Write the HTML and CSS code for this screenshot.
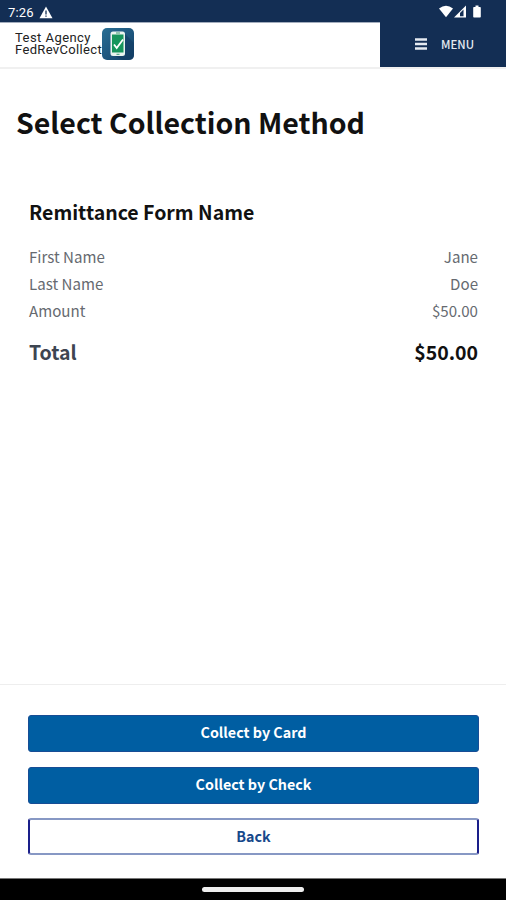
FILE: index.html
```html
<!DOCTYPE html>
<html lang="en">
<head>
<meta charset="utf-8">
<title>Select Collection Method</title>
<link rel="stylesheet" href="styles.css">
</head>
<body>
<div class="screen">
  <div class="status">
    <span class="time">7:26</span>
    <svg class="warning" width="14" height="13" viewBox="0 0 14 13"><path d="M7 .5 13.500 12.200H.5z" fill="#fff"/><path d="M7 4.500v4M7 9.500v1.300" stroke="#132e54" stroke-width="1.300"/></svg>
    <svg class="signals" width="43" height="14" viewBox="0 0 43 14"><path d="M0 3.500Q7-2 14 3.500L7 12.300z" fill="#fff"/><path d="M15 12.500 27 .5v12z" fill="#fff"/><path d="M21 11.300V8l3.500-3.500v6.800z" fill="#132e54"/><path d="M35 2h1.500V.5h3V2H41q.8 0 .8.8v8.900q0 .8-.8.8h-6q-.8 0-.8-.8V2.800q0-.8.8-.8z" fill="#fff"/></svg>
  </div>
  <header class="header">
    <div class="brand">
      <div class="brand-name"><span class="agency">Test Agency</span><span class="product">FedRevCollect</span></div>
      <svg class="logo" width="32" height="32" viewBox="0 0 32 32"><defs><linearGradient id="tile" x2="1" y2="1"><stop stop-color="#286e94"/><stop offset=".55" stop-color="#1d557d"/><stop offset="1" stop-color="#123c62"/></linearGradient></defs><rect width="32" height="32" rx="5" fill="url(#tile)"/><path d="m22 5 10 10v12q0 5-5 5h-6l-10-5z" fill="#123e66" opacity=".65"/><rect x="8.500" y="3.500" width="14.500" height="24.500" rx="2.500" fill="#e9f4ef"/><rect x="10" y="6.500" width="11.500" height="18" fill="#16955c"/><path d="m12 16.500 2.700 3.500 6.300-8.500" fill="none" stroke="#fff" stroke-width="1.800"/><path d="M14 5h4M14.500 26.300h3" stroke="#3c9a73"/></svg>
    </div>
    <div class="menu">
      <svg width="12" height="12" viewBox="0 0 12 12"><path d="M0 1.500h12M0 6h12M0 10.500h12" stroke="#e5eaf1" stroke-width="2.400"/></svg>
      <span>MENU</span>
    </div>
  </header>
  <main class="main">
    <h1><span>Select Collection Method</span></h1>
    <section class="summary">
      <h2><span>Remittance Form Name</span></h2>
      <div class="row"><span>First Name</span><span>Jane</span></div>
      <div class="row"><span>Last Name</span><span>Doe</span></div>
      <div class="row"><span>Amount</span><span>$50.00</span></div>
      <div class="total"><span class="total-label">Total</span><span>$50.00</span></div>
    </section>
  </main>
  <footer class="actions">
    <button class="button"><span>Collect by Card</span></button>
    <button class="button"><span>Collect by Check</span></button>
    <button class="button outline"><span>Back</span></button>
  </footer>
  <div class="navbar"><div class="handle"></div></div>
</div>
</body>
</html>
```

FILE: styles.css
```css
* { box-sizing: border-box; }
body { margin: 0; background: #fff; }
.screen {
  width: 506px;
  height: 900px;
  display: flex;
  flex-direction: column;
  font-family: "Noto Sans CJK SC", "Noto Sans", sans-serif;
  color: #111;
}
.status {
  height: 22px;
  flex: none;
  display: flex;
  align-items: center;
  padding: 2px 24px 0 8px;
  background: #132e54;
  color: #fff;
}
.time { padding-top: 1px; font: 13px/18px Roboto, sans-serif; letter-spacing: .2px; }
.warning { margin-left: 5px; }
.signals { margin-left: auto; }
.header { height: 47px; flex: none; display: flex; border-bottom: 2px solid #f0f0f0; }
.brand { width: 380px; display: flex; align-items: flex-start; padding: 5px 0 0 15px; border-top: 1px solid #a3adbd; }
.brand-name { width: 87px; padding-top: 4px; font: 13px/12px Roboto, sans-serif; color: #222; white-space: nowrap; }
.brand-name span { display: block; }
.agency { letter-spacing: .45px; }
.product { letter-spacing: .35px; }
.menu {
  flex: 1;
  display: flex;
  align-items: center;
  padding: 0 0 1px 35px;
  gap: 14px;
  background: #132e54;
  color: #e5eaf1;
  font-size: 11.4px;
  line-height: 18px;
  font-weight: 500;
}
.main { flex: 1; padding: 33px 28px 0 29px; }
h1 { margin: 0 0 0 -13px; font-size: 28.5px; line-height: 40px; font-weight: 700; white-space: nowrap; }
.summary { padding-top: 55px; }
h2 { margin: 0 0 16px; font-size: 19.5px; line-height: 30px; font-weight: 700; }
.row { display: flex; justify-content: space-between; font-size: 15.1px; line-height: 27px; color: #666a70; }
.total { display: flex; justify-content: space-between; margin-top: 13px; font-size: 19.5px; line-height: 30px; font-weight: 700; }
.total-label { color: #3d4551; }
.actions {
  height: 194px;
  flex: none;
  border-top: 1px solid #eee;
  padding: 30px 27px 0 28px;
  display: flex;
  flex-direction: column;
  gap: 15px;
}
.button {
  height: 37px;
  flex: none;
  padding: 0 0 3px;
  border: 1px solid #174d95;
  border-radius: 3px;
  background: #005ea2;
  color: #fff;
  font-family: inherit;
  font-size: 14.3px;
  line-height: 20px;
  font-weight: 700;
}
.outline {
  margin-top: -1px;
  padding-bottom: 1px;
  background: #fff;
  color: #17488b;
  border-style: solid;
  border-width: 2px;
  border-color: #8798c4 #1a1f8a;
}
.navbar { height: 22px; flex: none; background: #000; display: flex; justify-content: center; align-items: center; border-top: 1px solid #777; }
.handle { width: 102px; height: 5px; border-radius: 3px; background: #eee; }
```
